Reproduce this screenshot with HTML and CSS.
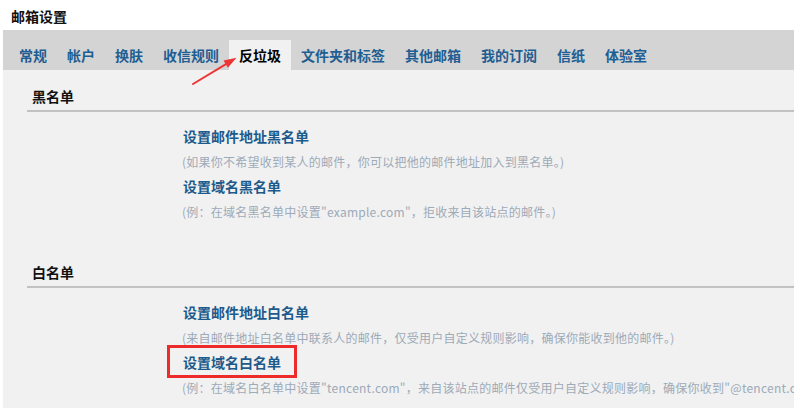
FILE: index.html
```html
<!DOCTYPE html>
<html lang="zh-CN">
<head>
<meta charset="utf-8">
<title>邮箱设置</title>
<link rel="stylesheet" href="styles.css">
</head>
<body>
<div class="page">
  <div class="title">邮箱设置</div>
  <div class="tabs">
    <span class="tab">常规</span>
    <span class="tab">帐户</span>
    <span class="tab">换肤</span>
    <span class="tab">收信规则</span>
    <span class="tab active">反垃圾</span>
    <span class="tab">文件夹和标签</span>
    <span class="tab">其他邮箱</span>
    <span class="tab">我的订阅</span>
    <span class="tab">信纸</span>
    <span class="tab">体验室</span>
  </div>
  <div class="content">
    <div class="section">
      <div class="section-head">黑名单</div>
      <div class="items">
        <div class="link"><span>设置邮件地址黑名单</span></div>
        <div class="desc">(如果你不希望收到某人的邮件，你可以把他的邮件地址加入到黑名单。)</div>
        <div class="link"><span>设置域名黑名单</span></div>
        <div class="desc">(例：在域名黑名单中设置"example.com"，拒收来自该站点的邮件。)</div>
      </div>
    </div>
    <div class="section">
      <div class="section-head">白名单</div>
      <div class="items">
        <div class="link"><span>设置邮件地址白名单</span></div>
        <div class="desc">(来自邮件地址白名单中联系人的邮件，仅受用户自定义规则影响，确保你能收到他的邮件。)</div>
        <div class="link"><span class="marked">设置域名白名单<span class="mark-box"></span></span></div>
        <div class="desc">(例：在域名白名单中设置"tencent.com"，来自该站点的邮件仅受用户自定义规则影响，确保你收到"@tencent.com"的邮件。)</div>
      </div>
    </div>
  </div>
  <svg class="arrow" width="794" height="409" viewBox="0 0 794 409">
    <line x1="193" y1="84" x2="226" y2="64.2" stroke="#ee3535" stroke-width="2" stroke-linecap="round"/>
    <polygon points="236.5,57.8 227.9,67.8 223.5,60.6" fill="#ee3535"/>
  </svg>
</div>
</body>
</html>
```

FILE: styles.css
```css
html, body {
  margin: 0;
  padding: 0;
  background: #ffffff;
  overflow: hidden;
}

body {
  font-family: "Noto Sans CJK SC", "Microsoft YaHei", sans-serif;
  font-size: 14px;
  color: #000;
  width: 794px;
  height: 409px;
}

.page {
  position: relative;
  width: 794px;
  height: 409px;
  overflow: hidden;
}

.title {
  height: 28px;
  padding: 2px 0 0 11px;
  line-height: 28px;
  font-weight: bold;
  font-size: 14px;
  color: #111;
}

.tabs {
  margin-left: 3px;
  height: 30px;
  padding: 10px 0 0 6px;
  background: #d4d4d4;
  display: flex;
  align-items: flex-end;
}

.tab {
  padding: 0 10px;
  line-height: 30px;
  height: 30px;
  font-weight: bold;
  color: #1f5e92;
  white-space: nowrap;
}

.tab.active {
  background: #f1f1f1;
  color: #000;
}

.content {
  margin-left: 3px;
  height: 338px;
  background: #f1f1f1;
  overflow: hidden;
}

.section-head {
  margin: 16px 0 0 24px;
  padding: 0 0 4px 5px;
  line-height: 20px;
  font-weight: bold;
  color: #111;
  border-bottom: 2px solid #c2c2c2;
}

.items {
  padding: 12px 0 22px 180px;
  white-space: nowrap;
}

.link {
  line-height: 25px;
  height: 25px;
  font-weight: bold;
  color: #1d5a8b;
}

.link > span {
  display: inline-block;
  height: 25px;
}

.desc {
  line-height: 25px;
  height: 25px;
  font-size: 12px;
  letter-spacing: 0.25px;
  color: #9daab8;
  margin-left: -1px;
}

.marked {
  position: relative;
}

.mark-box {
  position: absolute;
  left: -16px;
  top: -5px;
  width: 130px;
  height: 33px;
  box-sizing: border-box;
  border: 3px solid #ee2b2b;
}

.arrow {
  position: absolute;
  left: 0;
  top: 0;
  pointer-events: none;
}
```
